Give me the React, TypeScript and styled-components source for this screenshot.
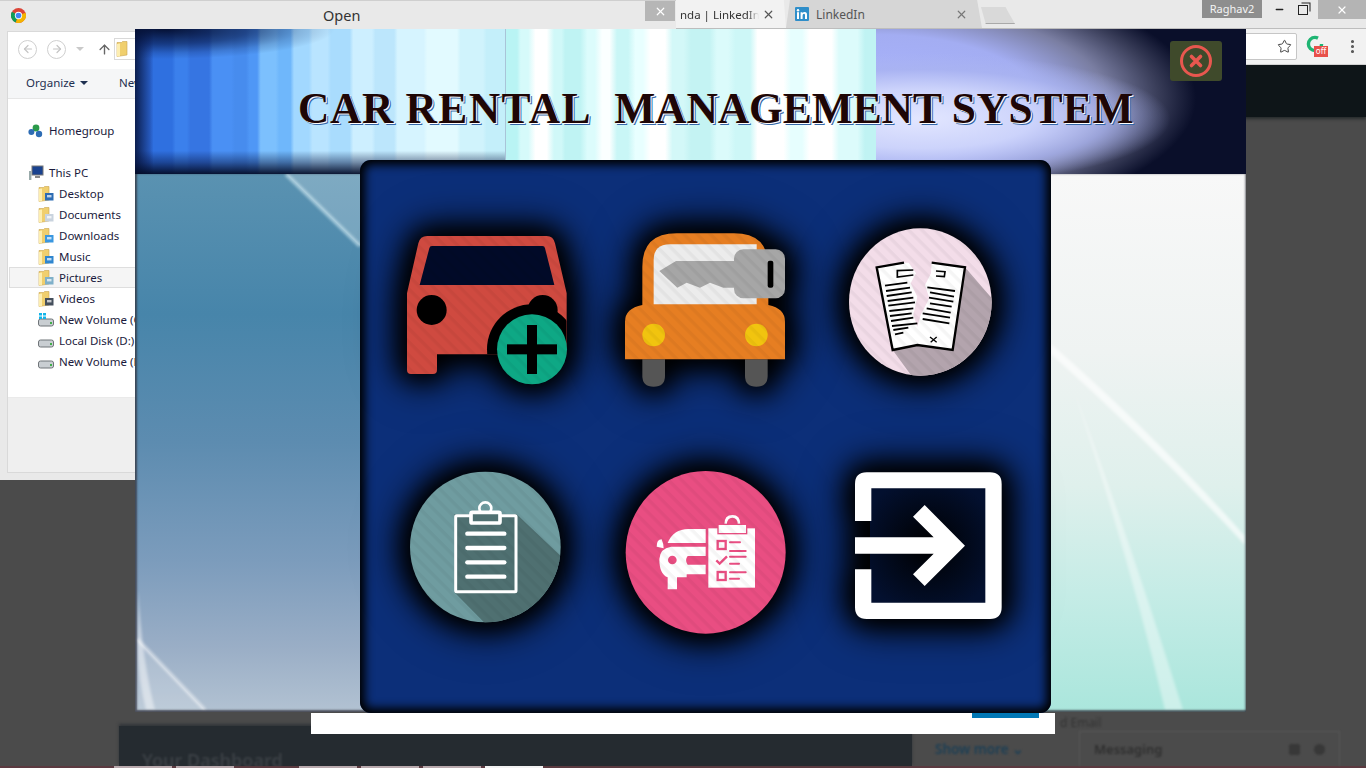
import React from "react";
import styled, { createGlobalStyle } from "styled-components";
import { ArrowLeft, ArrowRight, ArrowUp, Star, X, Minus, EllipsisVertical } from "lucide-react";

const Global = createGlobalStyle`
  html, body { margin: 0; padding: 0; width: 1366px; height: 768px; overflow: hidden; background: #4b4b4b; }
  * { box-sizing: border-box; }
`;

const Desktop = styled.div`
  position: relative; width: 1366px; height: 768px; overflow: hidden;
  font-family: "Noto Sans", "Open Sans", sans-serif; background: #4b4b4b;
`;

/* ---------- browser behind everything ---------- */
const Browser = styled.div`
  position: absolute; inset: 0; display: flex; flex-direction: column;
`;
const TabStrip = styled.div`
  height: 29px; background: #e9e9e9; border-bottom: 1px solid #bdbdbd; display: flex; padding-left: 676px; position: relative;
`;
const ActiveTab = styled.div`
  width: 110px; height: 28px; background: #f2f2f2; display: flex; align-items: center; justify-content: space-between;
  padding: 0 11px 0 4px; color: #333; clip-path: polygon(0 0, 98% 0, 100% 100%, 0 100%);
`;
const TabLabel = styled.span`
  width: 79px; overflow: hidden; white-space: nowrap; font-size: 11.5px;
  -webkit-mask-image: linear-gradient(90deg, #000 85%, transparent);
  mask-image: linear-gradient(90deg, #000 85%, transparent);
`;
const IdleTab = styled.div`
  width: 196px; height: 28px; margin-left: 0; background: #d6d6d6; display: flex; align-items: center; gap: 7px;
  padding: 0 14px 0 9px; font-size: 12px; color: #555;
  clip-path: polygon(2% 0, 97.5% 0, 100% 100%, 0 100%);
`;
const TabGrow = styled.span` flex: 1; `;
const NewTab = styled.div`
  width: 34px; height: 17px; margin-top: 7px; margin-left: -1px; background: #d9d9d9; border-bottom: 1px solid #a9a9a9;
  clip-path: polygon(0 0, 72% 0, 100% 100%, 14% 100%);
`;
const WindowControls = styled.div`
  position: absolute; right: 0; top: 0; height: 20px; display: flex; align-items: flex-start; color: #222;
`;
const UserBadge = styled.div`
  width: 60px; height: 18px; background: #8e8e8e; color: #f4f4f4; font-size: 11px; line-height: 17px; text-align: center;
  margin-right: 5px;
`;
const WinGlyph = styled.div`
  width: 24px; height: 19px; display: flex; align-items: center; justify-content: center;
`;
const RestoreGlyph = styled.div`
  width: 10px; height: 10px; border: 1.5px solid #222; box-shadow: 2px -2px 0 -0.5px #e9e9e9, 3px -3px 0 -0.5px #222;
`;
const CloseGlyph = styled.div`
  width: 48px; height: 19px; margin-left: 3px; background: #b4b4b4; color: #fff; display: flex; align-items: center; justify-content: center;
`;
const UrlBar = styled.div`
  height: 36px; background: #f2f2f2; display: flex; align-items: center; padding-left: 1000px; border-bottom: 1px solid #d8d8d8;
`;
const Omnibox = styled.div`
  width: 297px; height: 27px; background: #fff; border: 1px solid #c6c6c6; border-radius: 2px; display: flex; align-items: center;
  justify-content: flex-end; padding-right: 4px; color: #444;
`;
const ExtSlot = styled.div`
  margin-left: 9px; width: 22px; height: 24px; position: relative;
`;
const OffBadge = styled.span`
  position: absolute; left: 8px; top: 11px; width: 14px; height: 11px; background: #e8504a; color: #fff;
  font-size: 8px; line-height: 10px; text-align: center;
`;
const MenuDots = styled.div`
  margin-left: 16px; color: #555; display: flex;
`;
const PageHero = styled.div`
  height: 52px; background: #0e1518; box-shadow: 0 2px 3px rgba(14, 21, 24, .6);
`;
const PageFill = styled.div` flex: 1; `;
const Dock = styled.div`
  height: 40px; display: flex; padding-left: 119px; align-items: stretch;
`;
const DashboardCard = styled.div`
  width: 793px; background: #252b30; padding: 22px 0 0 23px; overflow: hidden; box-shadow: 0 -2px 3px rgba(37, 43, 48, .7);
`;
const BlurTitle = styled.div`
  color: #3b4045; font-size: 18px; font-weight: 600; filter: blur(1.2px); white-space: nowrap;
`;
const ShowMoreArea = styled.div`
  width: 167px; padding: 14px 0 0 23px; color: #1c3f55; font-size: 13.5px; font-weight: 600; filter: blur(1px); white-space: nowrap;
`;
const Messaging = styled.div`
  width: 261px; margin-top: 5px; border: 1px solid #575757; border-bottom: 0; display: flex; justify-content: space-between;
  padding: 8px 14px; color: #2f2f2f; font-size: 13px; font-weight: 600; filter: blur(.8px);
`;
const MsgDots = styled.div`
  display: flex; gap: 14px; align-items: center;
`;
const MsgDot = styled.span<{ $round?: boolean }>`
  width: 11px; height: 11px; background: #383838; border-radius: ${(p) => (p.$round ? "50%" : "2px")};
`;
const EmailHint = styled.div`
  position: absolute; left: 1060px; top: 714px; color: #333; font-size: 12px; filter: blur(.8px);
`;
const Taskbar = styled.div`
  height: 2px; background: #5b3a40; display: flex; padding-left: 114px; gap: 4px;
`;
const TaskTile = styled.span<{ $gap?: number; $on?: boolean }>`
  width: 58px; margin-left: ${(p) => p.$gap ?? 0}px; background: ${(p) => (p.$on ? "#f2f2f2" : "#b9a9ad")};
`;

/* ---------- explorer dialog ---------- */
const Explorer = styled.div`
  position: absolute; left: 0; top: 0; width: 676px; height: 480px; background: #e9e9e9; border-top: 1px solid #cfcfcf;
  display: flex; flex-direction: column; padding: 0 0 7px 7px;
`;
const DialogTitle = styled.div`
  height: 30px; display: flex; align-items: center; padding: 0 0 2px 4px; position: relative; color: #333; font-size: 14.5px;
`;
const DialogName = styled.span`
  position: absolute; left: 316px; top: 4px;
`;
const DialogClose = styled.div`
  position: absolute; right: 1px; top: 0; width: 30px; height: 20px; background: #b6b6b6; color: #fff; display: flex; align-items: center; justify-content: center;
`;
const DialogPane = styled.div`
  flex: 1; display: flex; flex-direction: column; border: 1px solid #d9d9d9; background: #fff;
`;
const NavButtons = styled.div`
  height: 37px; display: flex; align-items: center; padding: 0 0 3px 10px; color: #c4c4c4;
`;
const RoundBtn = styled.div`
  width: 19px; height: 19px; border: 1.5px solid #cfcfcf; border-radius: 50%; margin-right: 10px; display: flex; align-items: center; justify-content: center;
`;
const Caret = styled.span`
  width: 0; height: 0; border: 4px solid transparent; border-top: 4px solid #c9c9c9; margin: 4px 13px 0 0;
`;
const UpBtn = styled.div`
  color: #666; display: flex; margin-right: 2px;
`;
const AddressBox = styled.div`
  width: 300px; height: 22px; border: 1px solid #d9d9d9; padding-left: 1px; display: flex; align-items: center;
`;
const CommandBar = styled.div`
  height: 30px; background: #f5f6f7; border-bottom: 1px solid #e6e6e6; display: flex; align-items: center; padding: 0 0 2px 18px; gap: 31px;
  color: #1e3050; font-size: 11.5px;
`;
const CommandItem = styled.span`
  display: flex; align-items: center; gap: 5px;
`;
const CommandCaret = styled.span`
  width: 0; height: 0; border: 4px solid transparent; border-top: 4.5px solid #1e3050; margin-top: 4px;
`;
const NavTree = styled.div`
  height: 298px; padding-top: 21px; color: #1a1a3c; font-size: 11.5px;
`;
const TreeRow = styled.div<{ $depth: number; $on?: boolean; $after?: number }>`
  height: 21px; display: flex; align-items: center; gap: 5px; white-space: nowrap; margin-left: 1px;
  padding-left: ${(p) => (p.$depth ? 29 : 19)}px;
  margin-bottom: ${(p) => p.$after ?? 0}px;
  background: ${(p) => (p.$on ? "#f5f5f5" : "transparent")};
  box-shadow: ${(p) => (p.$on ? "inset 0 0 0 1px #dedede" : "none")};
`;
const DetailsPane = styled.div`
  flex: 1; background: #efefef; border-top: 1px solid #eaeaea;
`;

/* ---------- app window ---------- */
const AppWindow = styled.div`
  position: absolute; left: 135px; top: 29px; width: 1111px; height: 683px; display: flex; flex-direction: column;
`;
const Banner = styled.header`
  height: 145px; display: flex; position: relative;
`;
const BannerLeft = styled.div`
  flex: 1;
  background:
    radial-gradient(ellipse 170px 30px at 8% 0, rgba(3,12,44,.95) 0, rgba(6,22,70,.6) 50%, rgba(6,22,70,.18) 80%, transparent 100%),
    linear-gradient(180deg, transparent 84%, rgba(6,18,60,.45) 92%, rgba(3,12,40,.95) 100%),
    linear-gradient(90deg, rgba(3,12,44,.8) 0, transparent 5%),
    linear-gradient(90deg,
      #2c66d6 0 4%, #2f70e0 5% 10%, #3b80ec 11% 14%, #3675e2 15% 20%, #4a90f4 21% 26%, #478cee 27% 30%,
      #4f97f6 31% 33%, #7cc0fd 34% 38%, #6fb7fb 39% 42%, #a2d8ff 43% 47%, #b9e4ff 48% 52%, #a9dcfd 53% 58%,
      #cdefff 59% 64%, #bce6fc 65% 70%, #d6f4ff 71% 78%, #e2faff 79% 87%, #d0f3fc 88% 94%, #c4effa 95% 100%);
`;
const BannerCentre = styled.div`
  flex: 1; border-left: 1px solid #a9c4d8;
  background: linear-gradient(90deg,
    #b9f4f4 0 3%, #d6fafa 4% 6%, #ffffff 8% 11%, #d0f8f8 13% 15%, #bff3f3 16% 20%, #dcfcfc 22% 24%, #fbffff 26% 28%, #c9f6f6 30% 33%, #e8ffff 35% 37%,
    #ffffff 39% 43%, #d3f8f8 45% 48%, #c4f3f3 50% 55%, #dbfbfb 57% 60%, #cdf7f7 62% 66%, #ffffff 68% 75%,
    #e6fefe 77% 80%, #ffffff 82% 88%, #dcfbfb 90% 95%, #c0f3f3 97% 100%);
`;
const BannerRight = styled.div`
  flex: 1;
  background:
    radial-gradient(ellipse 250px 66px at 12% 62%, #e2e6ff 0, #ccd3fb 45%, rgba(170,180,240,.75) 75%, rgba(160,170,230,0) 100%),
    radial-gradient(ellipse 320px 128px at 0% 48%, #aab4ff 0, #a3adf2 50%, #7a7ea2 72%, #3a3e5a 88%, #0a0f2a 100%),
    #050a24;
`;
const Title = styled.h1`
  position: absolute; left: 163px; top: 54px; margin: 0; white-space: pre; font-family: "Liberation Serif", "DejaVu Serif", serif;
  font-weight: 700; font-size: 43.5px; line-height: 50px; color: #1e0606; letter-spacing: 0.6px;
  text-shadow: 1px 1px 0 #fff, 2px 2px 0 #3567a8;
`;
const TitleWord = styled.span<{ $track: number }>`
  letter-spacing: ${(p) => p.$track}px;
`;
const CloseButton = styled.button`
  position: absolute; right: 24px; top: 12px; width: 52px; height: 40px; padding: 0; border: 0; border-radius: 3px; background: #3f4a2b;
  display: flex; align-items: center; justify-content: center;
`;
const Wallpaper = styled.div`
  flex: 1; position: relative; display: flex;
  &::after {
    content: ""; position: absolute; inset: 0; box-shadow: inset 2px -2px 2px rgba(50, 50, 60, .75), inset -1px 0 2px rgba(50, 50, 60, .6);
  }
`;
const WallLeft = styled.div`
  flex: 1;
  background: linear-gradient(180deg, #5a92b1 0, #4785aa 26%, #5d8cb0 50%, #7c9cbc 72%, #9aaec6 88%, #b2c2d2 100%);
`;
const WallRight = styled.div`
  flex: 1;
  background: linear-gradient(180deg, #f8f8f8 0, #eff3f2 33%, #dff0ec 58%, #c5ece6 78%, #aae6dc 100%);
`;
const Streaks = styled.svg`
  position: absolute; inset: 0; width: 100%; height: 100%;
`;
const SoftStreaks = styled.g`
  filter: blur(1.4px);
`;

/* ---------- menu panel ---------- */
const MenuPanel = styled.nav`
  position: absolute; left: 360px; top: 160px; width: 691px; height: 553px; border-radius: 11px; background: #0c2f79;
  box-shadow: inset 0 0 10px 5px #000;
  display: grid; grid-template-columns: repeat(3, 218px); grid-auto-rows: 243px; justify-content: center; align-content: start; padding: 23px 2px 0 0;
`;
const Tile = styled.button`
  padding: 0; border: 0; background: none; display: flex; align-items: center; justify-content: center;
`;
const TileIcon = styled.svg`
  width: 170px; height: 170px; overflow: visible;
  filter: drop-shadow(0 0 12px #000) drop-shadow(0 0 14px #000) drop-shadow(0 0 16px rgba(0, 0, 0, .7));
`;
const LowerSheet = styled.div`
  position: absolute; left: 311px; top: 713px; width: 744px; height: 21px; background: #fff; display: flex; justify-content: flex-end; padding-right: 16px;
`;
const SheetButton = styled.div`
  width: 67px; height: 5px; background: #0077b5;
`;

const Hatch: React.FC<{ id: string; clip: React.ReactNode }> = ({ id, clip }) => (
  <>
    <defs>
      <pattern id={`p-${id}`} width="28" height="28" patternUnits="userSpaceOnUse" patternTransform="rotate(45)">
        <rect width="28" height="10" fill="#000" fillOpacity=".04" />
      </pattern>
      <clipPath id={`c-${id}`}>{clip}</clipPath>
    </defs>
    <rect x="-100" y="-100" width="1500" height="900" fill={`url(#p-${id})`} clipPath={`url(#c-${id})`} />
  </>
);

const CAR = "M51 235 L85 85 Q90 63 112 63 H470 Q490 63 495 85 L530 235 V418 H141 V465 Q141 477 129 477 H63 Q51 477 51 465 Z";
const RedCar = () => (
  <TileIcon viewBox="36 15 510 510">
    <defs><clipPath id="car-body"><path d={CAR} /></clipPath></defs>
    <path d={CAR} fill="#cf4a40" />
    <path d="M118 100 Q119 93 126 93 H457 Q464 93 465 100 L493 210 H89 Z" fill="#010a28" />
    <g clipPath="url(#car-body)" fill="#000">
      <circle cx="125" cy="285" r="45" />
      <circle cx="458" cy="285" r="45" />
      <circle cx="426" cy="403" r="135" />
    </g>
    <circle cx="426" cy="403" r="105" fill="#0ea885" />
    <Hatch id="red" clip={<><path d={CAR} /><circle cx="426" cy="403" r="105" /></>} />
    <rect x="351" y="388" width="150" height="30" fill="#000" />
    <rect x="411" y="330" width="30" height="147" fill="#000" />
  </TileIcon>
);

const ORANGE = "M705 320 Q705 280 757 270 V155 Q757 55 860 55 H1032 Q1135 55 1135 155 V270 Q1185 280 1185 320 V433 H705 Z";
const OrangeCar = () => (
  <TileIcon viewBox="690 15 510 510">
    <path d="M757 433 H825 V483 Q825 515 791 515 Q757 515 757 483 Z" fill="#555" />
    <path d="M1065 433 H1133 V483 Q1133 515 1099 515 Q1065 515 1065 483 Z" fill="#555" />
    <path d={ORANGE} fill="#e67e22" />
    <path d="M791 135 Q791 88 840 88 H1100 V268 H791 Z" fill="#ececec" />
    <circle cx="791" cy="360" r="34" fill="#f1c40f" />
    <circle cx="1099" cy="360" r="34" fill="#f1c40f" />
    <path d="M808 168 L858 138 H1032 V218 H1000 L960 203 L930 218 L890 203 L862 218 Z" fill="#a6a6a6" />
    <rect x="1032" y="103" width="153" height="147" rx="28" fill="#a6a6a6" />
    <rect x="1133" y="137" width="17" height="81" rx="6" fill="#000" />
    <Hatch id="orange" clip={<><path d={ORANGE} /><rect x="1032" y="103" width="153" height="147" rx="28" /></>} />
  </TileIcon>
);

const DOC_LEFT: number[][] = [[165,212,232,203],[168,228,240,218],[170,243,245,232],[173,258,250,248],[175,272,255,262],[178,288,250,280],[180,303,245,295],[183,318,250,308],[186,333,262,325],[190,345,235,338],[195,358,220,353]];
const DOC_RIGHT: number[][] = [[292,217,375,228],[300,232,372,245],[297,248,370,260],[300,265,365,275],[290,280,362,293],[278,295,360,308],[278,312,358,325]];
const TornDoc = () => (
  <TileIcon viewBox="24 15 510 510">
    <defs><clipPath id="doc-disc"><ellipse cx="271" cy="261" rx="214" ry="221" /></clipPath></defs>
    <ellipse cx="271" cy="261" rx="214" ry="221" fill="#f3dde9" />
    <polygon points="405,157 490,255 490,490 250,490 188,405 262,390 368,405" fill="#b3a4ad" clipPath="url(#doc-disc)" />
    <polygon points="140,157 222,143 236,143 258,175 242,205 262,245 250,300 262,335 272,300 298,250 285,210 303,175 305,143 405,157 368,405 262,390 188,405" fill="#fff" />
    <Hatch id="doc" clip={<ellipse cx="271" cy="261" rx="214" ry="221" />} />
    <g fill="none" stroke="#000" strokeWidth="7">
      <polyline points="222,143 140,157 188,405 262,390 368,405 405,157 305,143" />
      <polyline points="250,165 202,167 202,186 250,180" strokeWidth="5" />
      <polyline points="318,168 345,170 343,185 318,183" strokeWidth="5" />
      <path d="M300 366 L320 382 M320 366 L302 382" strokeWidth="4" />
      {DOC_LEFT.concat(DOC_RIGHT).map((l, i) => <line key={i} x1={l[0]} y1={l[1]} x2={l[2]} y2={l[3]} strokeWidth="5.5" />)}
    </g>
  </TileIcon>
);

const BOARD_LINES = [236, 279, 322, 365];
const Clipboard = () => (
  <TileIcon viewBox="21 24 510 510">
    <defs><clipPath id="clip-disc"><circle cx="271" cy="276" r="226" /></clipPath></defs>
    <circle cx="271" cy="276" r="226" fill="#6f9ca0" />
    <polygon points="178,178 365,178 510,315 510,510 275,510 178,412" fill="#4f7071" clipPath="url(#clip-disc)" />
    <Hatch id="board" clip={<circle cx="271" cy="276" r="226" />} />
    <rect x="182" y="182" width="181" height="228" rx="3" fill="none" stroke="#fff" strokeWidth="9" />
    <circle cx="271" cy="160" r="18" fill="none" stroke="#fff" strokeWidth="8" />
    <rect x="228" y="172" width="87" height="32" rx="4" fill="#4f7071" stroke="#fff" strokeWidth="11" />
    {BOARD_LINES.map((y) => <line key={y} x1="217" y1={y} x2="328" y2={y} stroke="#fff" strokeWidth="13" strokeLinecap="round" />)}
  </TileIcon>
);

const CHECK_ROWS = [[1005, 262, 1035], [1005, 288, 1052], [1005, 305, 1052], [1005, 326, 1032], [1005, 352, 1052], [1005, 371, 1032]];
const PinkService = () => (
  <TileIcon viewBox="675 24 510 510">
    <ellipse cx="932" cy="292" rx="240" ry="244" fill="#e94e82" />
    <rect x="940" y="220" width="140" height="178" fill="#fff" />
    <path d="M992 208 Q992 184 1012 184 Q1032 184 1032 208" fill="none" stroke="#fff" strokeWidth="8" />
    <rect x="969" y="208" width="86" height="28" fill="#fff" stroke="#e94e82" strokeWidth="4" />
    <rect x="968" y="258" width="24" height="24" fill="#fff" stroke="#e94e82" strokeWidth="7" />
    <rect x="968" y="351" width="24" height="24" fill="#fff" stroke="#e94e82" strokeWidth="7" />
    <path d="M964 316 L974 326 L996 304" fill="none" stroke="#e94e82" strokeWidth="7" />
    {CHECK_ROWS.map((r, i) => <line key={i} x1={r[0]} y1={r[1]} x2={r[2]} y2={r[1]} stroke="#e94e82" strokeWidth="6" strokeLinecap="round" />)}
    <path d="M818 264 Q835 222 880 222 H932 V264 Z" fill="#fff" />
    <path d="M785 275 Q785 253 800 253 Q806 268 806 280 Z" fill="#fff" />
    <path d="M793 312 Q795 280 828 275 H932 V303 H878 Q868 316 878 329 H932 V358 H875 V367 H846 V403 H818 V367 Q793 358 793 312 Z" fill="#fff" />
    <circle cx="832" cy="315" r="13" fill="#e94e82" />
    <Hatch id="pink" clip={<ellipse cx="932" cy="292" rx="240" ry="244" />} />
  </TileIcon>
);

const ExitIcon = () => (
  <TileIcon viewBox="-6 9 510 510">
    <defs>
      <radialGradient id="exit-core" cx="50%" cy="50%" r="60%">
        <stop offset="0" stopColor="#000" />
        <stop offset="1" stopColor="#03102f" />
      </radialGradient>
    </defs>
    <rect x="90" y="82" width="350" height="350" fill="url(#exit-core)" />
    <path d="M45 183 V72 Q45 37 80 37 H450 Q485 37 485 72 V442 Q485 477 450 477 H80 Q45 477 45 442 V328 H94 V428 H436 V85 H94 V183 Z" fill="#fff" />
    <polygon points="45,232 281,232 219,170 254,135 375,257 254,378 219,343 281,281 45,281" fill="#fff" />
  </TileIcon>
);

const ChromeLogo = () => (
  <svg width="15" height="15" viewBox="0 0 16 16">
    <circle cx="8" cy="8" r="8" fill="#db4437" />
    <path d="M8 8 L1 4 A8 8 0 0 0 5 15.4 Z" fill="#0f9d58" />
    <path d="M8 8 L15.4 5 A8 8 0 0 1 5 15.4 Z" fill="#f4b400" />
    <circle cx="8" cy="8" r="3.9" fill="#fff" />
    <circle cx="8" cy="8" r="3" fill="#4285f4" />
  </svg>
);

const LinkedInLogo = () => (
  <svg width="14" height="14" viewBox="0 0 14 14">
    <rect width="14" height="14" rx="1" fill="#2f8ec9" />
    <rect x="2" y="5.2" width="2" height="6.8" fill="#fff" />
    <circle cx="3" cy="3.2" r="1.2" fill="#fff" />
    <path d="M5.6 5.2 H7.5 V6.2 Q8.2 5 9.7 5 Q12 5 12 7.8 V12 H10 V8.2 Q10 6.8 9 6.8 Q7.6 6.8 7.6 8.4 V12 H5.6 Z" fill="#fff" />
  </svg>
);

const FolderGlyph: React.FC<{ accent?: string }> = ({ accent }) => (
  <svg width="16" height="16" viewBox="0 0 16 16">
    <path d="M1 1.5 H5.5 L6.5 .5 H11 V14 L1 15.5 Z" fill="#f0cf6e" stroke="#c9a552" strokeWidth=".6" />
    <path d="M1 3 L4 2.5 V15.5 H1 Z" fill="#fdeeb1" />
    {accent && <rect x="7" y="7" width="8.5" height="7.5" fill={accent} />}
    {accent && <rect x="9" y="9" width="4.5" height="2.4" fill="#fff" fillOpacity=".7" />}
  </svg>
);

const PcGlyph = () => (
  <svg width="16" height="16" viewBox="0 0 16 16">
    <rect x="4" y="1" width="11" height="9" fill="#19428f" stroke="#777" />
    <rect x="7" y="11" width="5" height="2" fill="#888" />
    <rect x="1" y="6" width="2.4" height="9" fill="#9aa" />
  </svg>
);
const HomeGlyph = () => (
  <svg width="16" height="16" viewBox="0 0 16 16">
    <circle cx="8" cy="5" r="3.4" fill="#2b9a4a" />
    <circle cx="3.4" cy="9" r="3" fill="#2d6cb4" />
    <circle cx="11" cy="11" r="3.2" fill="#2d6cb4" />
  </svg>
);
const DiskGlyph: React.FC<{ win?: boolean }> = ({ win }) => (
  <svg width="16" height="16" viewBox="0 0 16 16">
    <rect x="0.5" y="7" width="15" height="7" rx="2" fill="#c9ced2" stroke="#6f7478" />
    <rect x="12" y="10" width="2" height="2" fill="#3fae47" />
    {win && <path d="M1 1 H4 V3.6 H1 Z M5 1 H8 V3.6 H5 Z M1 4.4 H4 V7 H1 Z M5 4.4 H8 V7 H5 Z" fill="#12b5ea" />}
  </svg>
);

const TREE: { label: string; icon: React.ReactNode; depth: number; on?: boolean; after?: number }[] = [
  { label: "Homegroup", icon: <HomeGlyph />, depth: 0, after: 21 },
  { label: "This PC", icon: <PcGlyph />, depth: 0 },
  { label: "Desktop", icon: <FolderGlyph accent="#2d6cb4" />, depth: 1 },
  { label: "Documents", icon: <FolderGlyph accent="#c9d3de" />, depth: 1 },
  { label: "Downloads", icon: <FolderGlyph accent="#3a97e0" />, depth: 1 },
  { label: "Music", icon: <FolderGlyph accent="#2f86cf" />, depth: 1 },
  { label: "Pictures", icon: <FolderGlyph accent="#7fb0c9" />, depth: 1, on: true },
  { label: "Videos", icon: <FolderGlyph accent="#444f5c" />, depth: 1 },
  { label: "New Volume (C:)", icon: <DiskGlyph win />, depth: 1 },
  { label: "Local Disk (D:)", icon: <DiskGlyph />, depth: 1 },
  { label: "New Volume (E:)", icon: <DiskGlyph />, depth: 1 },
];

export default function App() {
  return (
    <Desktop>
      <Global />
      <Browser>
        <TabStrip>
          <ActiveTab>
            <TabLabel>nda | LinkedIn</TabLabel>
            <X size={13} strokeWidth={2.2} color="#555" />
          </ActiveTab>
          <IdleTab>
            <LinkedInLogo />
            <span>LinkedIn</span>
            <TabGrow />
            <X size={13} strokeWidth={2.2} color="#777" />
          </IdleTab>
          <NewTab />
          <WindowControls>
            <UserBadge>Raghav2</UserBadge>
            <WinGlyph><Minus size={11} strokeWidth={3} /></WinGlyph>
            <WinGlyph><RestoreGlyph /></WinGlyph>
            <CloseGlyph><X size={12} strokeWidth={2.4} /></CloseGlyph>
          </WindowControls>
        </TabStrip>
        <UrlBar>
          <Omnibox><Star size={15} strokeWidth={1.6} /></Omnibox>
          <ExtSlot>
            <svg width="18" height="18" viewBox="0 0 18 18"><circle cx="9" cy="9" r="6.6" fill="none" stroke="#1fb573" strokeWidth="3.4" strokeDasharray="34 8" /></svg>
            <OffBadge>off</OffBadge>
          </ExtSlot>
          <MenuDots><EllipsisVertical size={17} strokeWidth={2.4} /></MenuDots>
        </UrlBar>
        <PageHero />
        <PageFill />
        <Dock>
          <DashboardCard><BlurTitle>Your Dashboard</BlurTitle></DashboardCard>
          <ShowMoreArea>Show more ⌄</ShowMoreArea>
          <Messaging>
            <span>Messaging</span>
            <MsgDots><MsgDot /><MsgDot $round /></MsgDots>
          </Messaging>
        </Dock>
        <Taskbar>
          <TaskTile /><TaskTile /><TaskTile $gap={61} /><TaskTile /><TaskTile /><TaskTile $on />
        </Taskbar>
        <EmailHint>d Email</EmailHint>
      </Browser>

      <Explorer>
        <DialogTitle>
          <ChromeLogo />
          <DialogName>Open</DialogName>
          <DialogClose><X size={13} strokeWidth={2.2} /></DialogClose>
        </DialogTitle>
        <DialogPane>
          <NavButtons>
            <RoundBtn><ArrowLeft size={12} strokeWidth={2.4} /></RoundBtn>
            <RoundBtn><ArrowRight size={12} strokeWidth={2.4} /></RoundBtn>
            <Caret />
            <UpBtn><ArrowUp size={15} strokeWidth={2.2} /></UpBtn>
            <AddressBox><FolderGlyph /></AddressBox>
          </NavButtons>
          <CommandBar>
            <CommandItem>Organize<CommandCaret /></CommandItem>
            <CommandItem>New folder</CommandItem>
          </CommandBar>
          <NavTree>
            {TREE.map((row) => (
              <TreeRow key={row.label} $depth={row.depth} $on={row.on} $after={row.after}>
                {row.icon}<span>{row.label}</span>
              </TreeRow>
            ))}
          </NavTree>
          <DetailsPane />
        </DialogPane>
      </Explorer>

      <AppWindow>
        <Banner>
          <BannerLeft />
          <BannerCentre />
          <BannerRight />
          <Title>
            <TitleWord $track={0.6}>CAR </TitleWord>
            <TitleWord $track={1.4}>{"RENTAL  "}</TitleWord>
            <TitleWord $track={-0.1}>MANAGEMENT </TitleWord>
            <TitleWord $track={0.6}>SYSTEM</TitleWord>
          </Title>
          <CloseButton aria-label="Close">
            <svg width="34" height="34" viewBox="0 0 34 34">
              <circle cx="17" cy="17" r="14.5" fill="none" stroke="#e8574f" strokeWidth="3" />
              <path d="M12.5 12.5 L21.5 21.5 M21.5 12.5 L12.5 21.5" stroke="#e8574f" strokeWidth="3.6" strokeLinecap="round" />
            </svg>
          </CloseButton>
        </Banner>
        <Wallpaper>
          <WallLeft />
          <WallRight />
          <Streaks viewBox="135 174 1111 538" preserveAspectRatio="none">
            <polygon points="286,174 360,174 360,246" fill="#fff" fillOpacity=".22" />
            <polygon points="137,639 205,710 137,710" fill="#fff" fillOpacity=".16" />
            <SoftStreaks>
              <line x1="286" y1="174" x2="360" y2="246" stroke="#cbe6ef" strokeOpacity=".75" strokeWidth="3.5" />
              <line x1="137" y1="639" x2="205" y2="710" stroke="#fff" strokeOpacity=".6" strokeWidth="3" />
              <path d="M138 590 Q142 660 155 710 H146 Q138 680 137 640 Z" fill="#fff" fillOpacity=".45" />
              <path d="M1051 344 Q1150 430 1245 536 V545 Q1150 442 1051 354 Z" fill="#fff" fillOpacity=".65" />
              <path d="M1072 385 Q1130 560 1165 710 H1183 Q1130 540 1072 385 Z" fill="#fff" fillOpacity=".4" />
            </SoftStreaks>
          </Streaks>
        </Wallpaper>
      </AppWindow>

      <LowerSheet><SheetButton /></LowerSheet>

      <MenuPanel>
        <Tile aria-label="Add car"><RedCar /></Tile>
        <Tile aria-label="Rent car"><OrangeCar /></Tile>
        <Tile aria-label="Cancel rental"><TornDoc /></Tile>
        <Tile aria-label="Records"><Clipboard /></Tile>
        <Tile aria-label="Car report"><PinkService /></Tile>
        <Tile aria-label="Exit"><ExitIcon /></Tile>
      </MenuPanel>
    </Desktop>
  );
}
